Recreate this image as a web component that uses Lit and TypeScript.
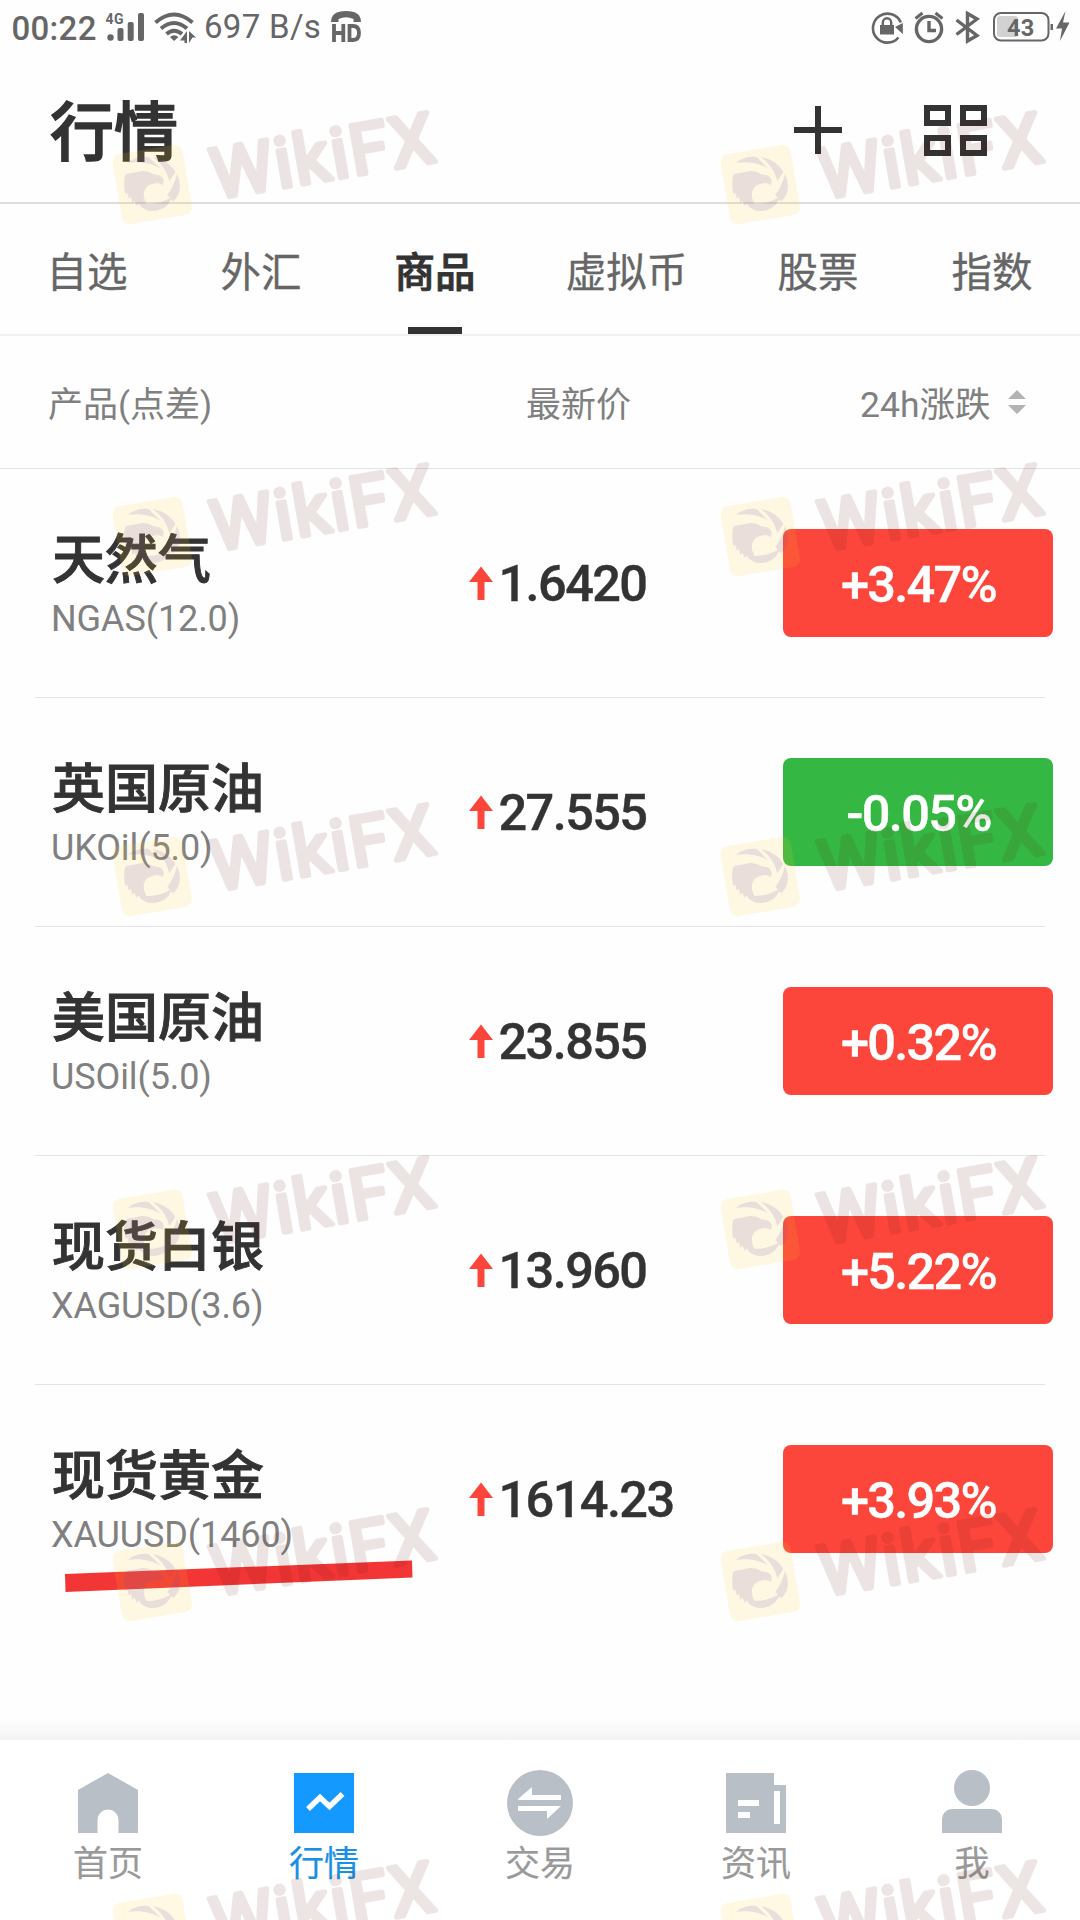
import { LitElement, html, css, svg } from "lit";
import { customElement, property } from "lit/decorators.js";
import { classMap } from "lit/directives/class-map.js";

interface Quote {
  name: string;
  code: string;
  price: string;
  change: string;
}

const QUOTES: Quote[] = [
  { name: "天然气", code: "NGAS(12.0)", price: "1.6420", change: "+3.47%" },
  { name: "英国原油", code: "UKOil(5.0)", price: "27.555", change: "-0.05%" },
  { name: "美国原油", code: "USOil(5.0)", price: "23.855", change: "+0.32%" },
  { name: "现货白银", code: "XAGUSD(3.6)", price: "13.960", change: "+5.22%" },
  { name: "现货黄金", code: "XAUUSD(1460)", price: "1614.23", change: "+3.93%" },
];

const TABS = ["自选", "外汇", "商品", "虚拟币", "股票", "指数"];

@customElement("status-bar")
class StatusBar extends LitElement {
  static styles = css`
    :host {
      display: flex;
      align-items: flex-start;
      justify-content: space-between;
      height: 56px;
      box-sizing: border-box;
      padding: 0 10px 0 11.500px;
      color: #666;
      font-family: Roboto, sans-serif;
      font-size: 33px;
      line-height: 57px;
    }
    .side {
      display: flex;
      height: 56px;
    }
    .clock {
      width: 93.500px;
      font-weight: 500;
      letter-spacing: 0.3px;
    }
    .rate {
      width: 125px;
      margin-left: 7px;
      font-size: 33px;
      letter-spacing: 0.3px;
      line-height: 54px;
    }
    svg {
      display: block;
    }
    text {
      font-family: Roboto, sans-serif;
      font-weight: 700;
    }
  `;

  render() {
    return html`
      <div class="side">
        <span class="clock">00:22</span>
        <svg width="92" height="56" viewBox="105 0 92 56" fill="#666">
          <text x="105.5" y="23.5" font-size="14" letter-spacing="0.4">4G</text>
          <circle cx="110.5" cy="37.5" r="3.2" />
          <rect x="117.5" y="28" width="6" height="13" rx="2" />
          <rect x="127.700" y="22" width="6" height="19" rx="2" />
          <rect x="138" y="13" width="6" height="28" rx="2" />
          <g fill="none" stroke="#666" stroke-width="4">
            <path d="M155.500 22.500Q174 6.500 192.500 22.500" />
            <path d="M161 28.500Q174 17.500 187 28.500" />
            <path d="M166.500 34Q174 27.500 182 34" />
          </g>
          <path d="M170 37Q174 33.500 178.500 37L174 41z" />
          <path d="M180 40.500L187 31V43H184.500V40.500zM189 31L196 37.500H192.500L189 43z" />
        </svg>
        <span class="rate">697 B/s</span>
        <svg width="34" height="56" viewBox="329 0 34 56" fill="#666">
          <path d="M331 22Q331 11 346 11T361 22H353.500V19Q346 15.500 338.500 19V22z" />
          <path
            d="M334 24V42M343.300 24V42M334 33H343.300M349.500 24V42M349.500 26H353Q359 26 359 33T353 40H349.500"
            fill="none"
            stroke="#666"
            stroke-width="3.800"
          />
        </svg>
      </div>
      <div class="side">
        <svg width="202" height="56" viewBox="868 0 202 56" fill="#666">
          <path
            d="M898.500 37.500A14.500 14.500 0 1 1 900.800 22.500"
            fill="none"
            stroke="#666"
            stroke-width="2.600"
          />
          <path d="M895 27L902.800 23V34z" />
          <rect x="880" y="25" width="14" height="9.500" />
          <path d="M882.800 26V22.500a4.200 4.200 0 0 1 8.400 0V26" fill="none" stroke="#666" stroke-width="2.400" />
          <g fill="none" stroke="#666" stroke-width="3.400">
            <circle cx="929" cy="29" r="12.600" />
            <path d="M915.500 18.500L922.500 13M935.500 13L942.500 18.500" stroke-width="3" />
            <path d="M929 21V30.500H936" />
            <path d="M956.500 20L977 35.500L967.500 41V13.500L977 19L956.500 34.500" />
          </g>
          <rect x="997" y="16" width="21" height="21" rx="3" fill="#d2d2d2" />
          <rect x="994" y="13" width="54.500" height="27.500" rx="7" fill="none" stroke="#666" stroke-width="2" />
          <rect x="1050.500" y="24" width="2.500" height="6" />
          <path d="M1065.500 11L1056 28.500H1062L1060 41L1069.500 22.500H1063z" />
          <text x="1007" y="35.500" font-size="23.500" letter-spacing="0.2">43</text>
        </svg>
      </div>
    `;
  }
}

@customElement("quote-row")
class QuoteRow extends LitElement {
  @property({ attribute: false }) quote!: Quote;
  @property({ type: Boolean }) last = false;

  static styles = css`
    :host {
      display: block;
      padding: 0 35px;
    }
    .row {
      display: flex;
      align-items: center;
      height: 228px;
      padding-left: 16px;
      margin-right: -8px;
      font-family: Roboto, "Noto Sans CJK SC", sans-serif;
    }
    .rule {
      height: 1px;
      background: #e3e3e3;
    }
    .rule.hidden {
      background: transparent;
    }
    .title {
      width: 418px;
      display: flex;
      flex-direction: column;
      gap: 10px;
    }
    .name {
      height: 60px;
      line-height: 66px;
      padding-left: 1px;
      font-size: 53px;
      font-weight: 500;
      color: #333;
      -webkit-text-stroke: 0.9px #333;
    }
    .code {
      height: 40px;
      line-height: 42px;
      font-size: 36px;
      letter-spacing: -0.1px;
      color: #808080;
    }
    .price {
      flex: 1;
      display: flex;
      align-items: center;
      gap: 5.500px;
      font-size: 50.500px;
      font-weight: 500;
      color: #333;
      letter-spacing: -1.600px;
    }
    .price span {
      height: 60px;
      line-height: 62px;
      -webkit-text-stroke: 0.4px #333;
    }
    .badge {
      width: 270px;
      height: 108px;
      border-radius: 8px;
      background: #fc463c;
      color: #fff;
      font-size: 50.500px;
      font-weight: 500;
      line-height: 112px;
      text-align: center;
      text-indent: 1px;
      letter-spacing: -1.700px;
      -webkit-text-stroke: 0.4px #fff;
    }
    .badge.down {
      background: #35b843;
    }
  `;

  render() {
    const q = this.quote;
    return html`
      <div class="row">
        <div class="title">
          <span class="name">${q.name}</span>
          <span class="code">${q.code}</span>
        </div>
        <div class="price">
          <svg width="24" height="34" viewBox="0 0 24 34" fill="#fc463c">
            <path d="M12 0.500L24 16H15.500V34H8.500V16H0z" />
          </svg>
          <span>${q.price}</span>
        </div>
        <div class=${classMap({ badge: true, down: q.change.startsWith("-") })}>${q.change}</div>
      </div>
      <div class=${classMap({ rule: true, hidden: this.last })}></div>
    `;
  }
}

const NAV = [
  {
    label: "首页",
    icon: svg`<path d="M3 20L33 3L63 20V63H43.500V50a10.500 10.500 0 0 0-21 0V63H3z" />`,
  },
  {
    label: "行情",
    icon: svg`<rect x="3" y="3" width="60" height="60" />
      <path d="M17 39L29 27.500L38.500 36.500L51.500 24" fill="none" stroke="#fff" stroke-width="5.500" />`,
  },
  {
    label: "交易",
    icon: svg`<circle cx="33" cy="33" r="33" />
      <path fill="#fff" d="M11 29L25 17V25H54V30H11zM11 36H54L40 49V41H11z" />`,
  },
  {
    label: "资讯",
    icon: svg`<path d="M3 3H51V15H63V63H3z" />
      <path fill="#fff" d="M15 30H36V36H15zM15 42H27V48H15zM51 21H57V54H51z" />`,
  },
  {
    label: "我",
    icon: svg`<circle cx="33" cy="18" r="18" />
      <path d="M3 63V49a10 10 0 0 1 10-10H53a10 10 0 0 1 10 10V63z" />`,
  },
];

@customElement("bottom-nav")
class BottomNav extends LitElement {
  static styles = css`
    :host {
      display: block;
      font-family: "Noto Sans CJK SC", sans-serif;
    }
    .shade {
      height: 20px;
      background: linear-gradient(#fefefe, #f3f3f3);
    }
    .items {
      display: grid;
      grid-template-columns: repeat(5, 1fr);
      height: 180px;
      box-sizing: border-box;
      padding-top: 30px;
      background: #fff;
    }
    .item {
      display: flex;
      flex-direction: column;
      align-items: center;
      color: #999;
      fill: #b9bfc6;
      font-size: 35px;
      line-height: 49px;
      -webkit-text-stroke: 0.2px currentColor;
    }
    .item.active {
      color: #1a90e4;
      fill: #1499ff;
    }
    .item svg {
      flex: none;
    }
  `;

  render() {
    return html`
      <div class="shade"></div>
      <div class="items">
        ${NAV.map(
          (n, i) => html`
            <div class=${classMap({ item: true, active: i === 1 })}>
              <svg width="66" height="66" viewBox="0 0 66 66">${n.icon}</svg>
              <span>${n.label}</span>
            </div>
          `
        )}
      </div>
    `;
  }
}

const MARK_X = [0, 608];
const MARK_Y = [0, 352, 692, 1045, 1397, 1749];

@customElement("brand-watermark")
class BrandWatermark extends LitElement {
  static styles = css`
    :host {
      display: block;
    }
    svg {
      display: block;
    }
    text {
      font-family: Roboto, sans-serif;
      font-weight: 400;
      font-size: 70px;
    }
    .tile {
      fill: #ffc828;
      opacity: 0.13;
    }
    .emblem {
      fill: #6e40b0;
      opacity: 0.13;
    }
    .word {
      fill: #5a140a;
      stroke: #5a140a;
      stroke-width: 5;
      stroke-linejoin: round;
      opacity: 0.105;
    }
  `;

  private mark(x: number, y: number) {
    return svg`
      <g transform="translate(${x} ${y})">
        <rect class="tile" x="-35.500" y="-35.500" width="71" height="71" rx="8"
          transform="translate(152.300 184.500) rotate(-9.500)" />
        <g class="emblem" transform="translate(0 80) scale(0.33333)">
          <path d="M384 248C402 233 425 228 446 231L482 266C455 250 425 243 384 248z" />
          <path d="M458 231C492 238 514 254 526 276L508 304C500 270 484 250 458 231z" />
          <path d="M531 282C546 315 541 345 519 364L502 345C515 328 525 307 531 282z" />
          <path d="M516 350C505 384 475 398 441 391L431 372C460 374 490 366 516 350z" />
          <path d="M376 285C388 277 402 279 412 276C430 270 448 274 460 283L478 286C490 292 495 302 488 316C478 306 462 310 449 314C434 322 428 338 433 356C438 372 448 383 458 392C435 392 422 383 416 370L410 378L404 362L397 368L393 351L385 355L384 340L376 341C372 325 371 300 376 285z" />
        </g>
        <g class="word" transform="translate(225 200.500) rotate(-9.700)">
          <text x="-9" y="-3" textLength="225" lengthAdjust="spacing">WikiFX</text>
        </g>
      </g>
    `;
  }

  render() {
    return html`
      <svg width="1080" height="1920" viewBox="0 0 1080 1920">
        ${MARK_Y.map((y) => MARK_X.map((x) => this.mark(x, y)))}
      </svg>
    `;
  }
}

@customElement("app-root")
class AppRoot extends LitElement {
  static styles = css`
    :host {
      display: block;
    }
    .screen {
      position: relative;
      display: flex;
      flex-direction: column;
      width: 1080px;
      height: 1920px;
      overflow: hidden;
      background: #fefefe;
      font-family: Roboto, "Noto Sans CJK SC", sans-serif;
    }
    .header {
      display: flex;
      align-items: center;
      height: 146px;
      padding: 0 93px 0 50px;
      border-bottom: 2px solid #dedede;
    }
    .header h1 {
      flex: 1;
      height: 146px;
      margin: 0;
      font-size: 64px;
      font-weight: 500;
      line-height: 155px;
      color: #333;
      -webkit-text-stroke: 1.500px #333;
    }
    .header svg {
      margin-top: 2px;
    }
    .header .add {
      margin-right: 82px;
    }
    .tabs {
      display: grid;
      grid-template-columns: 174px 174px 174px 209px 174px 174px;
      height: 130px;
      border-bottom: 2px solid #f1f1f1;
    }
    .tab {
      display: flex;
      flex-direction: column;
      align-items: center;
      justify-content: space-between;
      font-size: 40.500px;
      line-height: 138px;
      height: 130px;
      color: #666;
      -webkit-text-stroke: 0.3px currentColor;
    }
    .tab span {
      height: 123px;
    }
    .tab.active {
      color: #333;
      font-weight: 500;
      -webkit-text-stroke: 0.9px currentColor;
    }
    .tab.active::after {
      content: "";
      width: 54px;
      height: 7px;
      background: #333;
    }
    .columns {
      display: flex;
      align-items: center;
      height: 132px;
      padding: 0 54px 0 48px;
      border-bottom: 1px solid #e3e3e3;
      font-size: 35px;
      color: #808080;
    }
    .columns .label {
      height: 132px;
      line-height: 139px;
    }
    .columns .product {
      width: 478px;
    }
    .columns .latest {
      width: 334px;
    }
    .columns .change {
      flex: 1;
      display: flex;
      align-items: center;
      justify-content: space-between;
      font-size: 35.500px;
    }
    .spacer {
      flex: 1;
    }
    .stroke {
      position: absolute;
      left: 65px;
      top: 1560px;
    }
    .watermark {
      position: absolute;
      left: 0;
      top: 0;
    }
  `;

  render() {
    return html`
      <div class="screen">
        <status-bar></status-bar>
        <div class="header">
          <h1>行情</h1>
          <svg class="add" width="48" height="48" viewBox="0 0 48 48" fill="#333">
            <path d="M21 0H27V21H48V27H27V48H21V27H0V21H21z" />
          </svg>
          <svg width="63" height="51" viewBox="0 0 63 51" fill="none" stroke="#333" stroke-width="6">
            <path d="M3 3H24V18H3zM39 3H60V18H39zM3 33H24V48H3zM39 33H60V48H39z" />
          </svg>
        </div>
        <div class="tabs">
          ${TABS.map(
            (t, i) => html`<div class=${classMap({ tab: true, active: i === 2 })}><span>${t}</span></div>`
          )}
        </div>
        <div class="columns">
          <span class="label product">产品(点差)</span>
          <span class="label latest">最新价</span>
          <span class="change">
            <span class="label">24h涨跌</span>
            <svg width="18" height="24" viewBox="0 0 18 24" fill="#b3b3b3">
              <path d="M9 0L18 9H0zM0 15H18L9 24z" />
            </svg>
          </span>
        </div>
        ${QUOTES.map(
          (q, i) => html`<quote-row .quote=${q} ?last=${i === QUOTES.length - 1}></quote-row>`
        )}
        <div class="spacer"></div>
        <bottom-nav></bottom-nav>
        <svg class="stroke" width="348" height="33" viewBox="0 0 348 33">
          <path d="M0 14L347 0.500L347.500 17.500L0.500 32z" fill="#f23636" />
        </svg>
        <brand-watermark class="watermark"></brand-watermark>
      </div>
    `;
  }
}
